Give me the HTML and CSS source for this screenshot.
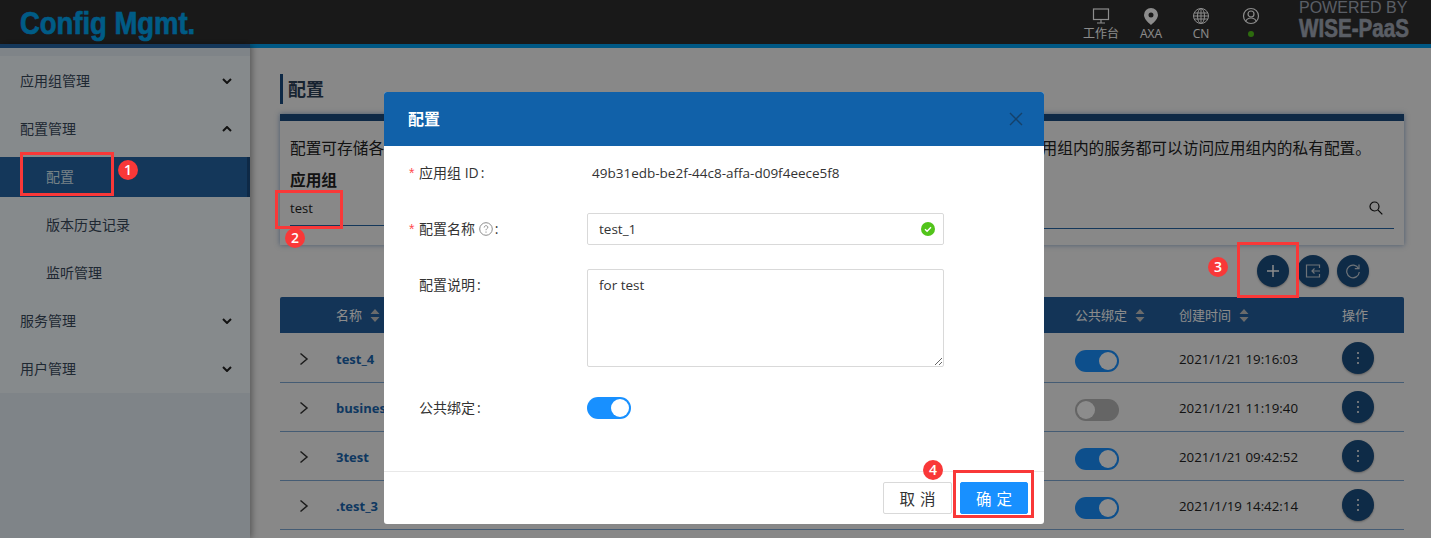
FILE: index.html
```html
<!DOCTYPE html>
<html lang="zh-CN">
<head>
  <meta charset="UTF-8">
  <title>Config Mgmt.</title>
  <link rel="stylesheet" href="styles.css">
</head>
<body>
  <header class="topbar">
    <div class="logo">Config Mgmt.</div>
    <div class="top-links">
      <div class="top-link">
        <svg width="18" height="18" viewBox="0 0 18 18" fill="none" stroke="currentColor" stroke-width="1.2"><rect x="1.5" y="2" width="15" height="10.5"/><path d="M9 12.5v3M5 16h8"/></svg>
        <span>工作台</span>
      </div>
      <div class="top-link">
        <svg width="18" height="18" viewBox="0 0 18 18"><path fill="currentColor" fill-rule="evenodd" d="M9 1a7 7 0 0 1 7 7c0 3.500-3.500 7-7 10C5.500 15 2 11.500 2 8a7 7 0 0 1 7-7zm0 4.500a2.500 2.500 0 1 0 0 5 2.500 2.500 0 0 0 0-5z"/></svg>
        <span>AXA</span>
      </div>
      <div class="top-link">
        <svg width="18" height="18" viewBox="0 0 18 18" fill="none" stroke="currentColor" stroke-width="1"><circle cx="9" cy="9" r="7.500"/><ellipse cx="9" cy="9" rx="3.500" ry="7.500"/><path d="M9 1.500v15M2.200 6h13.600M2.200 12h13.600M1.500 9h15"/></svg>
        <span>CN</span>
      </div>
      <div class="top-link">
        <svg width="18" height="18" viewBox="0 0 18 18" fill="none" stroke="currentColor" stroke-width="1.2"><circle cx="9" cy="9" r="7.500"/><circle cx="9" cy="7" r="3"/><path d="M3.800 14.200c1-2.300 3-3.200 5.200-3.200s4.200.9 5.200 3.200"/></svg>
        <i class="status-dot"></i>
      </div>
    </div>
    <div class="powered">
      <div class="powered-by">POWERED BY</div>
      <div class="powered-name">WISE-PaaS</div>
    </div>
  </header>

  <div class="layout">
    <aside class="sidebar">
      <nav class="nav">
        <div class="nav-item"><span>应用组管理</span><svg class="chev" width="10" height="6" viewBox="0 0 10 6"><path d="M1 1l4 4 4-4"/></svg></div>
        <div class="nav-item"><span>配置管理</span><svg class="chev" width="10" height="6" viewBox="0 0 10 6"><path d="M1 5l4-4 4 4"/></svg></div>
        <div class="nav-item nav-sub active"><span>配置</span></div>
        <div class="nav-item nav-sub"><span>版本历史记录</span></div>
        <div class="nav-item nav-sub"><span>监听管理</span></div>
        <div class="nav-item"><span>服务管理</span><svg class="chev" width="10" height="6" viewBox="0 0 10 6"><path d="M1 1l4 4 4-4"/></svg></div>
        <div class="nav-item"><span>用户管理</span><svg class="chev" width="10" height="6" viewBox="0 0 10 6"><path d="M1 1l4 4 4-4"/></svg></div>
      </nav>
    </aside>

    <main class="content">
      <h1 class="page-title">配置</h1>

      <section class="panel">
        <div class="panel-desc"><span>配置可存储各</span><span>用组内的服务都可以访问应用组内的私有配置。</span></div>
        <div class="panel-label">应用组</div>
        <div class="group-select">
          <span class="select-value">test</span>
          <span class="select-arrow"><svg width="14" height="14" viewBox="0 0 14 14" fill="none" stroke="#111" stroke-width="1.200"><circle cx="5.500" cy="5.500" r="4.500"/><path d="M8.800 8.800l4.500 4.500"/></svg></span>
        </div>
      </section>

      <div class="toolbar">
        <button class="round-btn"><svg width="14" height="14" viewBox="0 0 14 14" fill="none" stroke="currentColor" stroke-width="1.500"><path d="M7 1v12M1 7h12"/></svg></button>
        <button class="round-btn dim"><svg width="16" height="14" viewBox="0 0 16 14" fill="none" stroke="currentColor" stroke-width="1.200"><path d="M14.500 4V1H1.500v12h13v-3M15 7H7M9.500 4.500L7 7l2.500 2.500"/></svg></button>
        <button class="round-btn dim"><svg width="16" height="16" viewBox="0 0 16 16" fill="none" stroke="currentColor" stroke-width="1.200"><path d="M13.600 5.500A6.300 6.300 0 1 0 14.300 9"/><path d="M14 1.500v4.200H9.800"/></svg></button>
      </div>

      <table class="config-table">
        <colgroup><col class="col-expand"><col class="col-name"><col class="col-bind"><col class="col-time"><col></colgroup>
        <thead>
          <tr>
            <th></th>
            <th>名称 <svg class="sort" width="10" height="13" viewBox="0 0 10 13"><path d="M5 0l4.500 5h-9zM5 13L.5 8h9z"/></svg></th>
            <th>公共绑定 <svg class="sort" width="10" height="13" viewBox="0 0 10 13"><path d="M5 0l4.500 5h-9zM5 13L.5 8h9z"/></svg></th>
            <th>创建时间 <svg class="sort" width="10" height="13" viewBox="0 0 10 13"><path d="M5 0l4.500 5h-9zM5 13L.5 8h9z"/></svg></th>
            <th>操作</th>
          </tr>
        </thead>
        <tbody>
          <tr>
            <td><svg class="expand" width="10" height="14" viewBox="0 0 10 14"><path d="M1.500 1.500L8 7l-6.500 5.500"/></svg></td>
            <td class="name">test_4</td>
            <td class="cell-switch"><span class="switch on"></span></td>
            <td class="time">2021/1/21 19:16:03</td>
            <td class="cell-action"><button class="round-btn dim"><svg width="4" height="14" viewBox="0 0 4 14" fill="currentColor"><rect x="1" y="1" width="2" height="2"/><rect x="1" y="6" width="2" height="2"/><rect x="1" y="11" width="2" height="2"/></svg></button></td>
          </tr>
          <tr>
            <td><svg class="expand" width="10" height="14" viewBox="0 0 10 14"><path d="M1.500 1.500L8 7l-6.500 5.500"/></svg></td>
            <td class="name">business</td>
            <td class="cell-switch"><span class="switch"></span></td>
            <td class="time">2021/1/21 11:19:40</td>
            <td class="cell-action"><button class="round-btn dim"><svg width="4" height="14" viewBox="0 0 4 14" fill="currentColor"><rect x="1" y="1" width="2" height="2"/><rect x="1" y="6" width="2" height="2"/><rect x="1" y="11" width="2" height="2"/></svg></button></td>
          </tr>
          <tr>
            <td><svg class="expand" width="10" height="14" viewBox="0 0 10 14"><path d="M1.500 1.500L8 7l-6.500 5.500"/></svg></td>
            <td class="name">3test</td>
            <td class="cell-switch"><span class="switch on"></span></td>
            <td class="time">2021/1/21 09:42:52</td>
            <td class="cell-action"><button class="round-btn dim"><svg width="4" height="14" viewBox="0 0 4 14" fill="currentColor"><rect x="1" y="1" width="2" height="2"/><rect x="1" y="6" width="2" height="2"/><rect x="1" y="11" width="2" height="2"/></svg></button></td>
          </tr>
          <tr>
            <td><svg class="expand" width="10" height="14" viewBox="0 0 10 14"><path d="M1.500 1.500L8 7l-6.500 5.500"/></svg></td>
            <td class="name">.test_3</td>
            <td class="cell-switch"><span class="switch on"></span></td>
            <td class="time">2021/1/19 14:42:14</td>
            <td class="cell-action"><button class="round-btn dim"><svg width="4" height="14" viewBox="0 0 4 14" fill="currentColor"><rect x="1" y="1" width="2" height="2"/><rect x="1" y="6" width="2" height="2"/><rect x="1" y="11" width="2" height="2"/></svg></button></td>
          </tr>
        </tbody>
      </table>
    </main>
  </div>

  <div class="mask">
    <div class="modal">
      <div class="modal-head">
        <span>配置</span>
        <svg width="14" height="14" viewBox="0 0 14 14" fill="none" stroke="#15416a" stroke-width="1.400"><path d="M1 1l12 12M13 1L1 13"/></svg>
      </div>
      <div class="modal-body">
        <div class="form-row row-id">
          <label class="req">应用组 ID<i class="colon">:</i></label>
          <div class="form-value">49b31edb-be2f-44c8-affa-d09f4eece5f8</div>
        </div>
        <div class="form-row row-name">
          <label class="req">配置名称 <svg class="help" width="14" height="14" viewBox="0 0 14 14" fill="none" stroke="#8c8c8c"><circle cx="7" cy="7" r="6.300"/><path d="M5.200 5.500c0-2.400 3.600-2.400 3.600-.2 0 1.300-1.800 1.400-1.800 2.900"/><path d="M7 9.500v1.200"/></svg><i class="colon">:</i></label>
          <div class="input-wrap">
            <input class="text-input" type="text" value="test_1">
            <svg class="check" width="14" height="14" viewBox="0 0 14 14"><circle cx="7" cy="7" r="7" fill="#52c41a"/><path d="M4 7.200l2.100 2L10 5.200" fill="none" stroke="#fff" stroke-width="1.400"/></svg>
          </div>
        </div>
        <div class="form-row row-desc">
          <label>配置说明<i class="colon">:</i></label>
          <textarea class="text-area">for test</textarea>
        </div>
        <div class="form-row row-bind">
          <label>公共绑定<i class="colon">:</i></label>
          <span class="switch on"></span>
        </div>
      </div>
      <div class="modal-foot">
        <button class="btn">取 消</button>
        <button class="btn btn-primary">确 定</button>
      </div>
    </div>

    <div class="mark box-1"></div><div class="badge badge-1">1</div>
    <div class="mark box-2"></div><div class="badge badge-2">2</div>
    <div class="mark box-3"></div><div class="badge badge-3">3</div>
    <div class="mark box-4"></div><div class="badge badge-4">4</div>
  </div>
</body>
</html>
```

FILE: styles.css
```css
* { box-sizing: border-box; }
html, body { height: 538px; overflow: hidden; }
body {
  margin: 0; position: relative; background: #f7f7f7; color: #222;
  font-family: "Open Sans", "Noto Sans CJK SC", sans-serif; font-size: 14px;
}
button { font-family: inherit; }

/* top bar */
.topbar {
  height: 44px; background: #2f2f2f; display: flex; align-items: flex-start;
  padding: 0 21px 0 20px;
}
.logo {
  font-family: "Liberation Sans", sans-serif;
  font-size: 32px; font-weight: bold; line-height: 47px; color: #00a8f5; white-space: nowrap;
  -webkit-text-stroke: .7px #00a8f5;
  transform: scaleX(.857); transform-origin: left;
}
.top-links { display: flex; margin-left: auto; padding-top: 7px; }
.top-link {
  width: 50px; display: flex; flex-direction: column; align-items: center;
  color: #fff; font-size: 12px; line-height: 16px;
}
.top-link span { margin-top: 1px; }
.status-dot { width: 6px; height: 6px; border-radius: 50%; background: #52c41a; margin-top: 6px; }
.powered { margin-left: 23px; width: 111px; color: #a4abb9; }
.powered-by { font-family: "Liberation Sans", sans-serif; font-size: 16px; line-height: 16px; white-space: nowrap; }
.powered-name {
  font-family: "Liberation Sans", sans-serif; font-size: 25px; font-weight: bold; line-height: 24px;
  white-space: nowrap; width: 133px; -webkit-text-stroke: .6px #a4abb9;
  transform: scaleX(.825); transform-origin: left;
}

.layout { display: flex; height: 494px; }

/* sidebar */
.sidebar {
  width: 250px; flex: none; background: #e7f0f7; border-top: 4px solid #2664a4;
  padding-top: 8px; box-shadow: 2px 0 6px rgba(0,0,0,.35); position: relative;
}
.nav { background: #f4fbff; padding: 5px 0 4px; }
.nav-item {
  height: 40px; margin-bottom: 8px; padding: 0 18px 0 20px;
  display: flex; align-items: center; justify-content: space-between; color: #3a4a5c;
}
.nav-item span { margin-bottom: 2px; }
.nav-item:last-child { margin-bottom: 0; }
.nav-sub { padding-left: 46px; }
.nav-item.active { background: #2664a4; color: #d6ecf5; border-right: 3px solid #1b4c80; }
.chev { fill: none; stroke: #222; stroke-width: 2; }

/* main */
.content { flex: 1; min-width: 0; border-top: 4px solid #00a0f0; padding: 26px 27px 0 30px; }
.page-title {
  margin: 0 0 10px; height: 30px; line-height: 31px; border-left: 3px solid #1b4c80;
  padding-left: 5px; font-size: 18px; font-weight: bold; color: #2b4058;
}
.panel {
  height: 131px; border-top: 7px solid #1b4c80; padding: 16px 10px 0;
  box-shadow: 0 0 5px rgba(60,110,170,.6);
}
.panel-desc {
  display: flex; justify-content: space-between; font-size: 15.700px; line-height: 22px;
  padding-right: 23px;
}
.panel-label { font-size: 15.700px; font-weight: bold; line-height: 22px; margin-top: 10px; }
/* the line sits 3px lower right of the dialog than left of it */
.group-select { display: flex; align-items: flex-start; font-size: 13px; }
.select-value { width: 300px; height: 35px; line-height: 35px; border-bottom: 1px solid #2664a4; }
.select-arrow {
  flex: 1; height: 38px; border-bottom: 1px solid #2664a4; padding: 10px 11px 0 0;
  display: flex; justify-content: flex-end; align-items: flex-start;
}
.toolbar { display: flex; justify-content: flex-end; gap: 8px; margin-top: 10px; padding-right: 35px; }
.round-btn {
  width: 32px; height: 32px; border: 0; border-radius: 50%; padding: 0; background: #1b4f82; color: #fff;
  display: inline-flex; align-items: center; justify-content: center;
  box-shadow: 0 1px 2px rgba(0,0,0,.3);
}
.round-btn.dim { color: #c9d2da; }

/* table */
.config-table {
  width: 100%; margin-top: 10px; border-collapse: separate; border-spacing: 0; table-layout: fixed;
  font-size: 13px;
}
.col-expand { width: 56px; }
.col-bind { width: 104px; }
.col-time { width: 163px; }
.col-name { width: 739px; }
.config-table th {
  height: 36px; padding: 0 0 2px; background: #24609e; color: #fff; font-weight: normal; text-align: left;
}
.config-table thead th:first-child { border-radius: 2px 0 0 0; }
.config-table thead th:last-child { border-radius: 0 2px 0 0; }
.config-table td { height: 49px; padding: 2px 0 0; border-bottom: 1px solid #7fa8d3; }
.config-table tbody tr:first-child td { height: 50px; }
.config-table .cell-switch { padding-top: 6px; }
.config-table .cell-action { padding-top: 0; }
.time { font-size: 13.300px; }
.sort { fill: #c4c4c4; margin-left: 5px; vertical-align: -2px; }
.expand { fill: none; stroke: #333; stroke-width: 1.500; display: block; margin-left: 19px; }
.name { font-weight: bold; color: #1a66b0; }

.switch {
  display: block; width: 44px; height: 22px; border-radius: 11px; background: #b8b8b8; position: relative;
}
.switch::after {
  content: ""; position: absolute; top: 2px; left: 2px; width: 18px; height: 18px;
  border-radius: 50%; background: #fff;
}
.switch.on { background: #1890ff; }
.switch.on::after { left: 24px; }

/* modal */
.mask { position: absolute; top: 0; left: 0; width: 1431px; height: 538px; background: rgba(0,0,0,.45); }
.modal {
  width: 660px; height: 432px; margin: 92px 0 0 384px; background: #fff; border-radius: 3px; overflow: hidden;
  display: flex; flex-direction: column;
}
.modal-head {
  height: 54px; flex: none; background: #1161a9; color: #fff; font-size: 16px; font-weight: bold;
  display: flex; align-items: center; justify-content: space-between; padding: 0 21px 0 24px;
}
.modal-head span { margin-bottom: 2px; }
.modal-body { height: 325px; flex: none; padding: 16px 100px 0 25px; }
.form-row { display: flex; color: #333; }
.form-row label { width: 178px; height: 32px; flex: none; padding-left: 10px; line-height: 32px; white-space: nowrap; }
.form-row label.req { padding-left: 0; }
.req::before { content: "*"; color: #ff4d4f; display: inline-block; width: 10px; font-family: "Liberation Sans", sans-serif; }
.colon { font-style: normal; margin-left: 2px; }
.row-id, .row-bind { height: 22px; }
.row-id label, .row-bind label { height: 22px; line-height: 22px; }
.form-value { font-size: 13.500px; line-height: 22px; padding-left: 5px; white-space: nowrap; }
.row-name { margin-top: 29px; height: 32px; }
.row-desc { margin-top: 24px; height: 98px; }
.row-bind { margin-top: 30px; }
.help { vertical-align: -2px; }
.input-wrap { position: relative; width: 357px; }
.text-input, .text-area {
  display: block; width: 357px; border: 1px solid #d9d9d9; border-radius: 2px; padding: 4px 11px;
  font: inherit; font-size: 13.500px; color: #333; outline: 0; background: #fff;
}
.text-input { height: 32px; }
.text-area { height: 98px; padding-top: 6px; resize: vertical; }
.check { position: absolute; top: 9px; right: 9px; }
.modal-foot {
  flex: 1; border-top: 1px solid #e8e8e8; padding: 10px 16px; display: flex; justify-content: flex-end; gap: 8px;
}
.btn {
  width: 69px; height: 32px; border: 1px solid #d9d9d9; border-radius: 2px; background: #fff; color: #333;
  font-size: 15.500px; padding: 0; word-spacing: 1px;
}
.btn-primary { width: 68px; background: #1890ff; border-color: #1890ff; color: #fff; }

/* red call-outs drawn on the screenshot */
.mark { position: absolute; border: 3px solid #f93838; }
.box-1 { left: 20px; top: 152px; width: 94px; height: 44px; }
.box-2 { left: 275px; top: 190px; width: 68px; height: 39px; }
.box-3 { left: 1237px; top: 242px; width: 62px; height: 56px; }
.box-4 { left: 953px; top: 470px; width: 81px; height: 48px; }
.badge {
  position: absolute; width: 20px; height: 20px; border-radius: 50%; background: #f93838; color: #fff;
  font-size: 14px; font-weight: 600; line-height: 20px; text-align: center;
}
.badge-1 { left: 118px; top: 160px; }
.badge-2 { left: 285px; top: 228px; }
.badge-3 { left: 1208px; top: 257px; }
.badge-4 { left: 923px; top: 460px; }
```
